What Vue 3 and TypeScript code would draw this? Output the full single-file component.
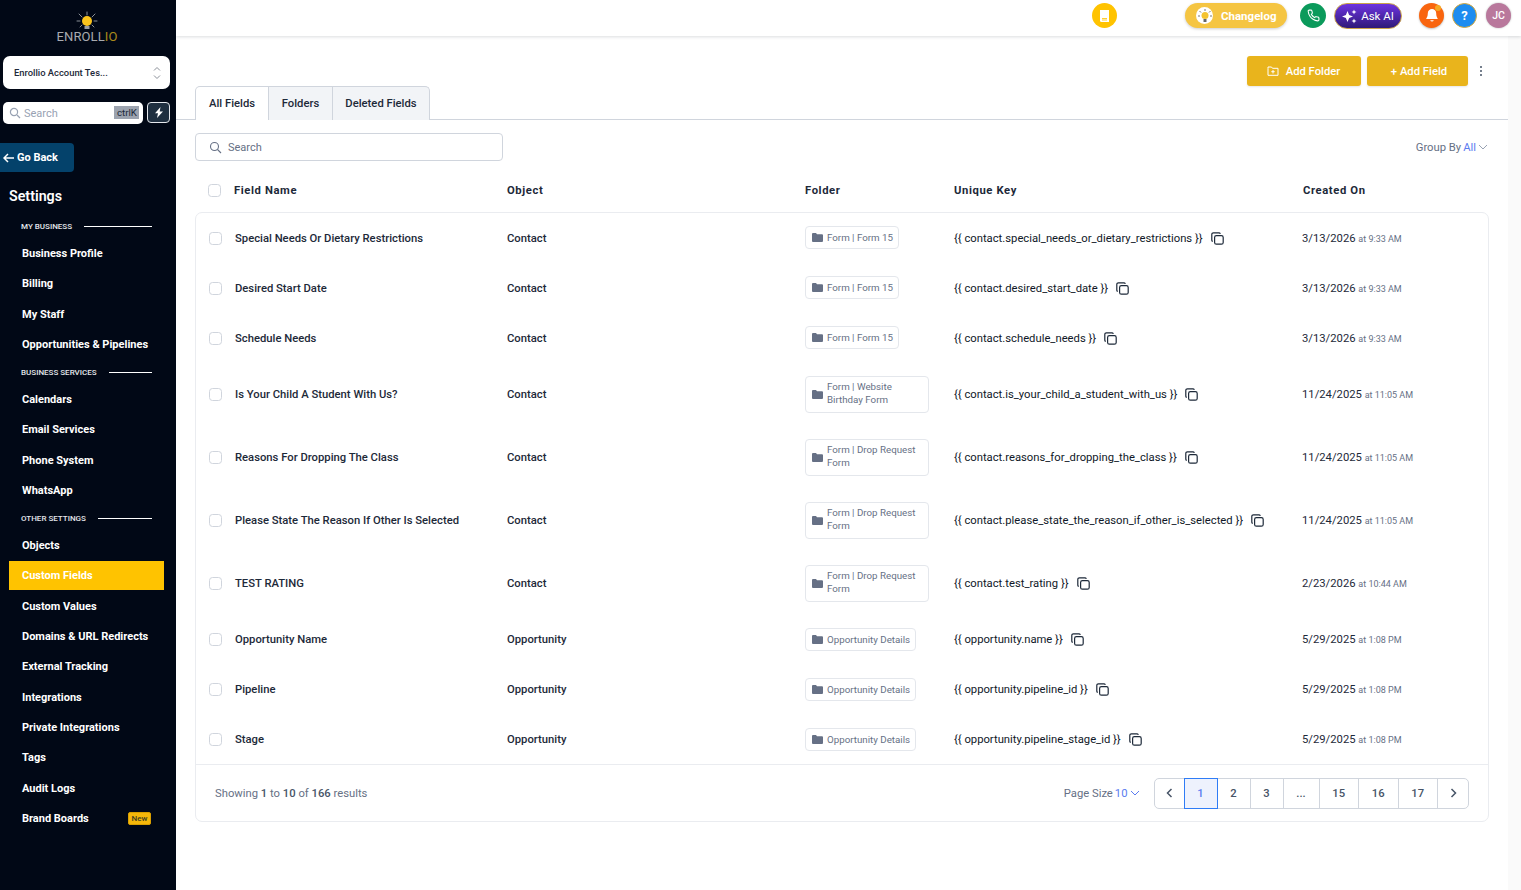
<script setup lang="ts">
interface Field {
  name: string
  object: string
  folder: string
  wide?: boolean
  key: string
  date: string
  time: string
}

const groups = [
  { title: 'MY BUSINESS', items: ['Business Profile', 'Billing', 'My Staff', 'Opportunities & Pipelines'] },
  { title: 'BUSINESS SERVICES', items: ['Calendars', 'Email Services', 'Phone System', 'WhatsApp'] },
  {
    title: 'OTHER SETTINGS',
    items: [
      'Objects',
      'Custom Fields',
      'Custom Values',
      'Domains & URL Redirects',
      'External Tracking',
      'Integrations',
      'Private Integrations',
      'Tags',
      'Audit Logs',
      'Brand Boards',
    ],
  },
]

const fields: Field[] = [
  { name: 'Special Needs Or Dietary Restrictions', object: 'Contact', folder: 'Form | Form 15', key: 'contact.special_needs_or_dietary_restrictions', date: '3/13/2026', time: '9:33 AM' },
  { name: 'Desired Start Date', object: 'Contact', folder: 'Form | Form 15', key: 'contact.desired_start_date', date: '3/13/2026', time: '9:33 AM' },
  { name: 'Schedule Needs', object: 'Contact', folder: 'Form | Form 15', key: 'contact.schedule_needs', date: '3/13/2026', time: '9:33 AM' },
  { name: 'Is Your Child A Student With Us?', object: 'Contact', folder: 'Form | Website Birthday Form', wide: true, key: 'contact.is_your_child_a_student_with_us', date: '11/24/2025', time: '11:05 AM' },
  { name: 'Reasons For Dropping The Class', object: 'Contact', folder: 'Form | Drop Request Form', wide: true, key: 'contact.reasons_for_dropping_the_class', date: '11/24/2025', time: '11:05 AM' },
  { name: 'Please State The Reason If Other Is Selected', object: 'Contact', folder: 'Form | Drop Request Form', wide: true, key: 'contact.please_state_the_reason_if_other_is_selected', date: '11/24/2025', time: '11:05 AM' },
  { name: 'TEST RATING', object: 'Contact', folder: 'Form | Drop Request Form', wide: true, key: 'contact.test_rating', date: '2/23/2026', time: '10:44 AM' },
  { name: 'Opportunity Name', object: 'Opportunity', folder: 'Opportunity Details', key: 'opportunity.name', date: '5/29/2025', time: '1:08 PM' },
  { name: 'Pipeline', object: 'Opportunity', folder: 'Opportunity Details', key: 'opportunity.pipeline_id', date: '5/29/2025', time: '1:08 PM' },
  { name: 'Stage', object: 'Opportunity', folder: 'Opportunity Details', key: 'opportunity.pipeline_stage_id', date: '5/29/2025', time: '1:08 PM' },
]

const pages = ['1', '2', '3', '...', '15', '16', '17']
</script>

<template>
  <div class="app">
    <aside class="sidebar">
      <div class="logo">
        <svg width="24" height="22" viewBox="0 0 24 22">
          <g stroke="#8a8f96" stroke-width="1" stroke-linecap="round">
            <path d="M12 1v3M4 3l3 3M20 3l-3 3M2 10h3M22 10h-3M5 16l2-2M19 16l-2-2" />
          </g>
          <circle cx="12" cy="10" r="5" fill="#fbc41c" />
          <path d="M9.500 15h5v3h-5z" fill="#9a9da3" />
        </svg>
        <div class="logo-text">ENROLL<span>IO</span></div>
      </div>

      <div class="account">
        <span>Enrollio Account Tes...</span>
        <svg width="10" height="16" viewBox="0 0 10 16" fill="none" stroke="#8b9099" stroke-width="1">
          <path d="M2 5.500l3-3 3 3M2 10.500l3 3 3-3" />
        </svg>
      </div>

      <div class="search-row">
        <div class="side-search">
          <svg width="12" height="12" viewBox="0 0 12 12" fill="none" stroke="#98a2b3" stroke-width="1.200">
            <circle cx="5" cy="5" r="3.600" /><path d="M8 8l3 3" />
          </svg>
          <span class="side-search-label">Search</span>
          <span class="kbd">ctrlK</span>
        </div>
        <button class="bolt">
          <svg width="10" height="11" viewBox="0 0 10 11"><path d="M6.500 0L1 6.300h3L3 11l6-6.500H5.700z" fill="#fff" /></svg>
        </button>
      </div>

      <button class="go-back">
        <svg width="11" height="10" viewBox="0 0 11 10" fill="none" stroke="#fff" stroke-width="1.500">
          <path d="M11 5H1.500M5 1L1 5l4 4" />
        </svg>
        Go Back
      </button>

      <div class="settings-title">Settings</div>

      <nav class="nav">
        <div v-for="g in groups" :key="g.title" class="nav-group">
          <div class="nav-head">
            <span>{{ g.title }}</span><i></i>
          </div>
          <a v-for="item in g.items" :key="item" class="nav-item" :class="{ active: item === 'Custom Fields' }">
            {{ item }}
            <em v-if="item === 'Brand Boards'" class="new">New</em>
          </a>
        </div>
      </nav>
    </aside>

    <div class="main">
      <header class="topbar">
        <span class="round book">
          <svg width="13" height="14" viewBox="0 0 13 14"><path d="M2 1h9v12H3.500A1.500 1.500 0 0 1 2 11.500z" fill="#fff" /><path d="M4 9.500h5M4 11h5" stroke="#ffc300" stroke-width=".8" /></svg>
        </span>
        <span class="changelog">
          <span class="bulb-wrap">
            <svg width="16" height="16" viewBox="0 0 16 16">
              <g stroke="#555" stroke-width=".8"><path d="M8 1v2M2.500 3l1.500 1.500M13.500 3L12 4.500M1 8h2M15 8h-2" /></g>
              <circle cx="8" cy="7.500" r="3.500" fill="#f4c330" /><path d="M6.500 11h3v3h-3z" fill="#666" />
            </svg>
          </span>
          Changelog
        </span>
        <span class="round phone">
          <svg width="13" height="13" viewBox="0 0 24 24" fill="none" stroke="#fff" stroke-width="2">
            <path d="M22 16.900v3a2 2 0 0 1-2.200 2 19.800 19.800 0 0 1-8.600-3 19.500 19.500 0 0 1-6-6 19.800 19.800 0 0 1-3-8.700A2 2 0 0 1 4.100 2h3a2 2 0 0 1 2 1.700c.1 1 .4 1.900.7 2.800a2 2 0 0 1-.5 2.100L8.100 9.900a16 16 0 0 0 6 6l1.300-1.300a2 2 0 0 1 2.100-.4c.9.300 1.800.6 2.800.7a2 2 0 0 1 1.700 2z" />
          </svg>
        </span>
        <span class="ask-ai">
          <svg width="15" height="15" viewBox="0 0 15 15" fill="#fff">
            <path d="M5.500 2l1.600 3.900L11 7.500 7.100 9.100 5.500 13 3.900 9.100 0 7.500l3.900-1.600z" />
            <path d="M12 0.500l.7 1.800 1.800.7-1.800.7-.7 1.800-.7-1.800-1.800-.7 1.800-.7zM12 9.500l.7 1.800 1.800.7-1.800.7-.7 1.800-.7-1.800-1.800-.7 1.800-.7z" />
          </svg>
          Ask AI
        </span>
        <span class="round bell">
          <svg width="14" height="15" viewBox="0 0 14 15" fill="#fff">
            <path d="M7 1a4.200 4.200 0 0 0-4.200 4.200c0 3.800-1.600 5-1.600 5.800h11.600c0-.8-1.600-2-1.600-5.800A4.200 4.200 0 0 0 7 1z" /><path d="M5.200 12.200a1.900 1.900 0 0 0 3.600 0z" />
          </svg>
          <b class="dot"></b>
        </span>
        <span class="round help">?</span>
        <span class="round avatar">JC</span>
      </header>

      <div class="body">
        <div class="content">
          <div class="actions">
            <button class="gold add-folder">
              <svg width="12" height="10" viewBox="0 0 12 10" fill="none" stroke="#fff" stroke-width="1">
                <path d="M1 2.500V1h3.500l1 1.300H11v7H1zM6 4v3.500M4.300 5.700h3.400" />
              </svg>
              Add Folder
            </button>
            <button class="gold add-field">+ Add Field</button>
            <span class="kebab"><i></i><i></i><i></i></span>
          </div>

          <div class="tabs">
            <span class="tab current">All Fields</span>
            <span class="tab t2">Folders</span>
            <span class="tab t3">Deleted Fields</span>
          </div>

          <div class="filter-row">
            <div class="search">
              <svg width="13" height="13" viewBox="0 0 13 13" fill="none" stroke="#667085" stroke-width="1.100">
                <circle cx="5.500" cy="5.500" r="4" /><path d="M8.500 8.500l3.500 3.500" />
              </svg>
              <span>Search</span>
            </div>
            <div class="group-by">
              Group By <span class="link">All</span>
              <svg width="10" height="6" viewBox="0 0 10 6" fill="none" stroke="#98a2b3" stroke-width="1"><path d="M1 1l4 4 4-4" /></svg>
            </div>
          </div>

          <div class="thead grid">
            <span class="check head-check"></span>
            <span>Field Name</span>
            <span>Object</span>
            <span>Folder</span>
            <span>Unique Key</span>
            <span class="th-date">Created On</span>
          </div>

          <div class="card">
            <div v-for="f in fields" :key="f.key" class="row grid" :class="{ tall: f.wide }">
              <span class="check"></span>
              <span>{{ f.name }}</span>
              <span>{{ f.object }}</span>
              <span class="chip-cell">
                <span class="chip" :class="{ 'chip-wide': f.wide }">
                  <svg width="11" height="9" viewBox="0 0 11 9"><path d="M0 1a1 1 0 0 1 1-1h3l1 1.300h5a1 1 0 0 1 1 1V8a1 1 0 0 1-1 1H1a1 1 0 0 1-1-1z" fill="#667085" /></svg>
                  <span class="chip-text">{{ f.folder }}</span>
                </span>
              </span>
              <span class="key">
                <span>&#123;&#123; {{ f.key }} &#125;&#125;</span>
                <svg width="13" height="13" viewBox="0 0 13 13" fill="none" stroke="#1d2939" stroke-width="1.200">
                  <rect x="3.600" y="3.600" width="8.600" height="8.600" rx="1.800" />
                  <path d="M9.300 1.800A1.200 1.200 0 0 0 8.200.8H2.400A1.600 1.600 0 0 0 .8 2.400v5.800c0 .5.400 1 1 1.100" />
                </svg>
              </span>
              <span class="created">{{ f.date }} <small>at {{ f.time }}</small></span>
            </div>

            <div class="foot">
              <div class="showing">Showing <b>1</b> to <b>10</b> of <b>166</b> results</div>
              <div class="page-size">
                Page Size <span class="link">10</span>
                <svg width="10" height="6" viewBox="0 0 10 6" fill="none" stroke="#5b7cf0" stroke-width="1"><path d="M1 1l4 4 4-4" /></svg>
              </div>
              <div class="pager">
                <span class="pg arrow">
                  <svg width="7" height="10" viewBox="0 0 7 10" fill="none" stroke="#475467" stroke-width="1.500"><path d="M5.500 1l-4 4 4 4" /></svg>
                </span>
                <span v-for="p in pages" :key="p" class="pg" :class="['p' + p.length, { on: p === '1' }]">{{ p }}</span>
                <span class="pg arrow">
                  <svg width="7" height="10" viewBox="0 0 7 10" fill="none" stroke="#475467" stroke-width="1.500"><path d="M1.500 1l4 4-4 4" /></svg>
                </span>
              </div>
            </div>
          </div>
        </div>
        <div class="strip"></div>
      </div>
    </div>
  </div>
</template>

<style>
html,
body {
  margin: 0;
  overflow: hidden;
}
</style>

<style scoped>
.app {
  display: flex;
  width: 1521px;
  height: 890px;
  overflow: hidden;
  font-family: Roboto, "Liberation Sans", sans-serif;
  background: #fff;
}

/* sidebar */
.sidebar {
  width: 176px;
  flex: none;
  background: #010816;
  color: #fff;
  display: flex;
  flex-direction: column;
  box-sizing: border-box;
}
.logo {
  height: 56px;
  padding: 11px 2px 0 0;
  box-sizing: border-box;
  text-align: center;
  line-height: 0;
}
.logo-text {
  font-size: 13px;
  line-height: 14px;
  font-weight: 400;
  color: #a8abb0;
  margin-top: -3px;
  letter-spacing: 0.1px;
}
.logo-text span {
  color: #a98a1c;
}
.account {
  margin: 0 6px 0 3px;
  height: 33px;
  background: #fff;
  border-radius: 7px;
  display: flex;
  align-items: center;
  justify-content: space-between;
  padding: 0 8px 0 11px;
  font-size: 9.400px;
  font-weight: 500;
  color: #1d2939;
}
.search-row {
  display: flex;
  gap: 4px;
  margin: 13px 6px 0 3px;
}
.side-search {
  flex: 1;
  height: 22px;
  background: #fff;
  border-radius: 5px;
  display: flex;
  align-items: center;
  padding: 0 4px 0 6px;
  font-size: 11px;
}
.side-search-label {
  margin-left: 3px;
  color: #98a2b3;
  flex: 1;
}
.kbd {
  background: #9ca3af;
  color: #1d2939;
  font-size: 9.750px;
  line-height: 13px;
  padding: 0 2px 0 3px;
  margin-top: -2px;
}
.bolt {
  width: 23px;
  height: 21px;
  background: #1f2f40;
  border: 1px solid #e4e7ec;
  border-radius: 4px;
  padding: 0;
  display: flex;
  align-items: center;
  justify-content: center;
}
.go-back {
  margin-top: 19px;
  width: 74px;
  height: 29px;
  background: #04426b;
  color: #fff;
  border: 0;
  border-radius: 0 4px 4px 0;
  font: 700 11px Roboto, sans-serif;
  display: flex;
  align-items: center;
  padding: 0 0 0 3px;
  gap: 3px;
}
.settings-title {
  margin: 14px 0 0 9px;
  font-size: 14.250px;
  line-height: 20px;
  font-weight: 600;
}
.nav {
  margin-top: 10.600px;
}
.nav-head {
  display: flex;
  align-items: center;
  margin: 0 24px 0 21px;
  height: 20px;
  font-size: 8px;
  font-weight: 500;
  color: #e4e7ec;
}
.nav-head i {
  flex: 1;
  height: 1px;
  background: #fff;
  margin-left: 12px;
}
.nav-group + .nav-group {
  margin-top: 2.800px;
}
.nav-item {
  display: flex;
  align-items: center;
  justify-content: space-between;
  height: 30.350px;
  margin: 0 12px 0 9px;
  padding: 0 13px;
  box-sizing: border-box;
  font-size: 11px;
  font-weight: 700;
  color: #fff;
}
.nav-group .nav-item:first-of-type {
  margin-top: 1.800px;
}
.nav-item.active {
  background: #ffc300;
  height: 29px;
  margin-top: 0.700px;
  margin-bottom: 0.700px;
}
.new {
  font-style: normal;
  font-size: 8px;
  font-weight: 500;
  line-height: 11px;
  width: 23px;
  height: 13px;
  box-sizing: border-box;
  text-align: center;
  background: #f5b70a;
  color: #3d3d1f;
  border: 1px solid #d99f00;
  border-radius: 2px;
}

/* main */
.main {
  flex: 1;
  min-width: 0;
  display: flex;
  flex-direction: column;
}
.topbar {
  height: 36px;
  flex: none;
  display: flex;
  align-items: flex-start;
  padding: 3px 10px 0 0;
  box-sizing: border-box;
  box-shadow: 0 1px 3px rgba(16, 24, 40, 0.15);
  position: relative;
  justify-content: flex-end;
}
.round {
  width: 25px;
  height: 25px;
  border-radius: 50%;
  display: flex;
  align-items: center;
  justify-content: center;
  color: #fff;
  position: relative;
  flex: none;
}
.book {
  background: #ffc300;
  margin-right: 68px;
}
.changelog {
  width: 102px;
  height: 25px;
  background: #f5c542;
  border-radius: 13px;
  color: #fff;
  font-size: 11.500px;
  font-weight: 700;
  display: flex;
  align-items: center;
  box-sizing: border-box;
  padding-left: 11px;
  gap: 8px;
  box-shadow: 0 1px 3px rgba(0, 0, 0, 0.2);
  margin-right: 13px;
}
.bulb-wrap {
  width: 17px;
  height: 17px;
  border-radius: 50%;
  background: #fff;
  display: flex;
  align-items: center;
  justify-content: center;
}
.phone {
  background: #0b9a5b;
  width: 26px;
  margin-right: 8px;
}
.ask-ai {
  width: 68px;
  height: 26px;
  box-sizing: border-box;
  border-radius: 13px;
  border: 1px solid #c9a24a;
  background: linear-gradient(180deg, #6d33e0, #2f1a78);
  color: #fff;
  font-size: 11.500px;
  font-weight: 400;
  display: flex;
  align-items: center;
  justify-content: center;
  gap: 4px;
  margin-right: 17px;
}
.bell {
  background: #f9650f;
  box-shadow: 0 1px 2px rgba(0, 0, 0, 0.25);
  margin-right: 8px;
}
.dot {
  position: absolute;
  top: 2px;
  right: 3px;
  width: 6px;
  height: 6px;
  border-radius: 50%;
  background: #f7a823;
}
.help {
  background: #1d8cf0;
  border: 1px solid #d9a93a;
  box-sizing: border-box;
  font-size: 13px;
  font-weight: 700;
  margin-right: 9px;
}
.avatar {
  background: #b9789c;
  font-size: 10.500px;
  font-weight: 500;
  box-shadow: 0 0 2px rgba(0, 0, 0, 0.3);
}

.body {
  flex: 1;
  display: flex;
  min-height: 0;
}
.content {
  flex: 1;
  min-width: 0;
}
.strip {
  width: 13px;
  background: #fafafa;
}
.actions {
  display: flex;
  justify-content: flex-end;
  align-items: center;
  height: 30px;
  margin-top: 20px;
  padding-right: 26px;
}
.gold {
  height: 30px;
  background: #e9b41c;
  color: #fff;
  border: 0;
  border-radius: 3px;
  font: 500 11.250px Roboto, sans-serif;
  display: flex;
  align-items: center;
  justify-content: center;
  gap: 7px;
  box-shadow: 0 1px 2px rgba(16, 24, 40, 0.1);
}
.add-folder {
  width: 114px;
  margin-right: 6px;
}
.add-field {
  width: 101px;
  padding-left: 10px;
}
.kebab {
  display: flex;
  flex-direction: column;
  gap: 1.500px;
  margin-left: 12px;
}
.kebab i {
  width: 2.500px;
  height: 2.500px;
  border-radius: 50%;
  background: #475467;
}
.tabs {
  display: flex;
  height: 34px;
  box-sizing: border-box;
  padding-left: 19px;
  border-bottom: 1px solid #d0d5dd;
}
.tab {
  height: 34px;
  box-sizing: border-box;
  display: flex;
  align-items: center;
  justify-content: center;
  font-size: 11.250px;
  font-weight: 500;
  color: #1d2939;
  background: #f2f4f7;
  border: 1px solid #d0d5dd;
  border-left: 0;
  border-bottom: 0;
}
.tab.current {
  width: 74px;
  background: #fff;
  border-left: 1px solid #d0d5dd;
  border-radius: 5px 0 0 0;
}
.t2 {
  width: 64px;
}
.t3 {
  width: 97px;
  border-radius: 0 5px 0 0;
}
.filter-row {
  display: flex;
  justify-content: space-between;
  align-items: center;
  margin-top: 13px;
  padding: 0 20px 0 19px;
}
.search {
  width: 308px;
  height: 28px;
  box-sizing: border-box;
  border: 1px solid #d0d5dd;
  border-radius: 4px;
  display: flex;
  align-items: center;
  gap: 6px;
  padding-left: 13px;
  font-size: 11px;
  color: #667085;
}
.group-by {
  font-size: 11.250px;
  color: #667085;
  display: flex;
  align-items: center;
  gap: 2px;
}
.link {
  color: #5b7cf0;
}
.grid {
  display: grid;
  grid-template-columns: 40px 272px 298px 149px 348px 1fr;
  align-items: center;
}
.thead {
  height: 43px;
  margin: 8px 19px 0 19px;
  font-size: 11.250px;
  font-weight: 700;
  color: #1d2939;
  letter-spacing: 0.6px;
  box-sizing: border-box;
}
.th-date {
  margin-left: 1px;
}
.check {
  width: 13px;
  height: 13px;
  box-sizing: border-box;
  border: 1px solid #d0d5dd;
  border-radius: 3.500px;
  margin-left: 14px;
  background: #fff;
}
.head-check {
  margin-left: 13px;
}
.card {
  margin: 0 19px 0 19px;
  border: 1px solid #eaecf0;
  border-radius: 7px;
  box-sizing: border-box;
  height: 610px;
}
.thead span:nth-child(2) {
  margin-left: -1px;
}
.row {
  height: 50px;
  font-size: 11.250px;
  font-weight: 500;
  color: #1d2939;
  margin-left: -1px;
}
.row.tall {
  height: 62.900px;
}
.chip-cell {
  display: flex;
  align-items: center;
}
.chip {
  display: inline-flex;
  align-items: center;
  gap: 4px;
  height: 23px;
  box-sizing: border-box;
  padding: 0 5px 0 6px;
  border: 1px solid #e4e7ec;
  border-radius: 4px;
  font-size: 9.750px;
  font-weight: 400;
  color: #667085;
  margin-top: -1px;
}
.chip svg {
  flex: none;
}
.chip-wide {
  width: 124px;
  height: 37px;
  line-height: 13px;
  margin-top: 0;
}
.chip-wide .chip-text {
  padding-bottom: 2px;
}
.key {
  display: flex;
  align-items: center;
  gap: 8px;
  font-weight: 400;
  color: #101828;
}
.created {
  font-weight: 400;
  color: #1d2939;
}
.created small {
  font-size: 9px;
  color: #667085;
}
.foot {
  display: flex;
  align-items: center;
  height: 57px;
  margin-top: -1px;
  border-top: 1px solid #eaecf0;
  padding: 0 19px 0 19px;
  font-size: 11.250px;
  color: #667085;
}
.showing {
  flex: 1;
}
.showing b {
  font-weight: 500;
  color: #475467;
}
.page-size {
  display: flex;
  align-items: center;
  gap: 2px;
  margin-right: 14px;
}
.pager {
  display: flex;
  height: 31px;
  box-sizing: border-box;
  border: 1px solid #d0d5dd;
  border-radius: 5px;
}
.pg {
  display: flex;
  align-items: center;
  justify-content: center;
  width: 33px;
  box-sizing: border-box;
  border-right: 1px solid #d0d5dd;
  font-size: 11.250px;
  font-weight: 500;
  color: #475467;
}
.pg:last-child {
  border-right: 0;
}
.pg.arrow {
  width: 30px;
}
.pg.p3 {
  width: 36px;
}
.pg.p2 {
  width: 39.500px;
}
.pg.on {
  background: #eef2fd;
  color: #5b7cf0;
  margin: -1px 0 -1px -1px;
  border: 1px solid #2f7cf6;
  width: 34px;
}
</style>
